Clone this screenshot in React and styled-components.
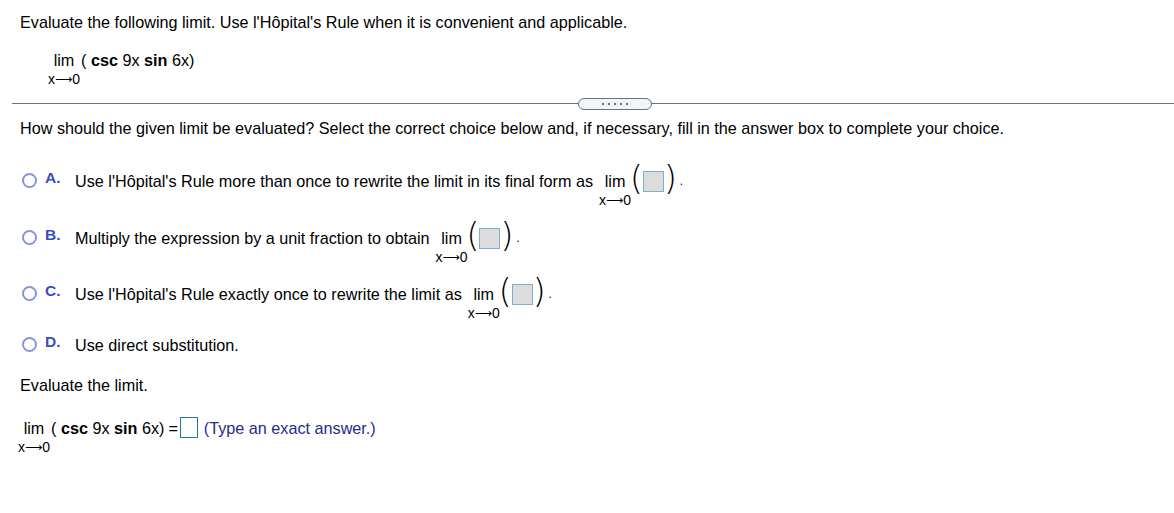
import React from 'react';
import styled, { createGlobalStyle } from 'styled-components';

const Global = createGlobalStyle`
  body {
    margin: 0;
    background: #fff;
    font-family: "Liberation Sans", Arial, sans-serif;
    color: #000;
  }
`;

const options = [
  { key: 'A', text: "Use l'Hôpital's Rule more than once to rewrite the limit in its final form as", lim: true, h: 57 },
  { key: 'B', text: 'Multiply the expression by a unit fraction to obtain', lim: true, h: 56 },
  { key: 'C', text: "Use l'Hôpital's Rule exactly once to rewrite the limit as", lim: true, h: 51 },
  { key: 'D', text: 'Use direct substitution.', lim: false, h: 30 },
];

function LimOp() {
  return (
    <S.LimOp>
      <S.LimWord>lim</S.LimWord>
      <S.LimSub>
        x<S.Arrow>⟶</S.Arrow>0
      </S.LimSub>
    </S.LimOp>
  );
}

function Expr() {
  return (
    <S.Expr>
      (&nbsp;<b>csc</b> 9x <b>sin</b> 6x)
    </S.Expr>
  );
}

export default function App() {
  return (
    <S.Page>
      <Global />
      <S.Intro>
        <S.Text>Evaluate the following limit. Use l'Hôpital's Rule when it is convenient and applicable.</S.Text>
        <S.LimRow>
          <LimOp />
          <Expr />
        </S.LimRow>
      </S.Intro>

      <S.Divider>
        <S.Pill>
          {[0, 1, 2, 3, 4].map(i => (
            <S.Dot key={i} />
          ))}
        </S.Pill>
      </S.Divider>

      <S.Body>
        <S.Text>
          How should the given limit be evaluated? Select the correct choice below and, if necessary, fill in the
          answer box to complete your choice.
        </S.Text>

        <S.Choices>
          {options.map(o => (
            <S.Choice key={o.key} $h={o.h}>
              <S.Radio />
              <S.Letter>{o.key}.</S.Letter>
              <S.ChoiceText>{o.text}</S.ChoiceText>
              {o.lim && (
                <>
                  <LimOp />
                  <S.Paren>(</S.Paren>
                  <S.GrayBox />
                  <S.Paren>)</S.Paren>
                  <S.Period>.</S.Period>
                </>
              )}
            </S.Choice>
          ))}
        </S.Choices>

        <S.Text>Evaluate the limit.</S.Text>

        <S.AnswerRow>
          <LimOp />
          <Expr />
          <S.Eq>=</S.Eq>
          <S.AnswerBox />
          <S.Hint>(Type an exact answer.)</S.Hint>
        </S.AnswerRow>
      </S.Body>
    </S.Page>
  );
}

const S = {
  Page: styled.div`
    width: 1174px;
    padding-top: 13px;
    font-size: 16.2px;
  `,
  Intro: styled.div`
    padding-left: 20px;
  `,
  Text: styled.p`
    margin: 0;
    line-height: 18px;
  `,
  LimRow: styled.div`
    display: flex;
    align-items: flex-start;
    margin-top: 20px;
    margin-left: 28px;
  `,
  LimOp: styled.div`
    display: inline-flex;
    flex-direction: column;
    align-items: center;
    margin-right: 1px;
  `,
  LimWord: styled.span`
    line-height: 18px;
  `,
  LimSub: styled.span`
    display: flex;
    align-items: center;
    font-size: 14px;
    line-height: 14px;
    margin-top: 3px;
    white-space: nowrap;
  `,
  Arrow: styled.span`
    font-family: "DejaVu Sans", sans-serif;
    font-size: 12px;
  `,
  Expr: styled.span`
    line-height: 18px;
    white-space: nowrap;
    b {
      font-weight: bold;
    }
  `,
  Divider: styled.div`
    position: relative;
    margin: 12px 0 0 12px;
    height: 12px;
    display: flex;
    align-items: center;
    justify-content: center;
    &::before {
      content: '';
      position: absolute;
      left: 0;
      right: 0;
      top: 5px;
      border-top: 1px solid #6b7280;
    }
  `,
  Pill: styled.div`
    position: relative;
    width: 72px;
    height: 10px;
    margin-left: 44px;
    border: 1px solid #6b7280;
    border-radius: 6px;
    background: #f3f4f6;
    display: flex;
    align-items: center;
    justify-content: center;
    gap: 4px;
  `,
  Dot: styled.span`
    width: 2px;
    height: 2px;
    background: #6b7280;
  `,
  Body: styled.div`
    padding-left: 20px;
    margin-top: 9px;
  `,
  Choices: styled.div`
    display: flex;
    flex-direction: column;
    margin: 35px 0 10px 2px;
  `,
  Choice: styled.div`
    display: flex;
    align-items: flex-start;
    height: ${p => p.$h}px;
  `,
  Radio: styled.span`
    width: 11px;
    height: 11px;
    border: 2px solid #8595dc;
    border-radius: 50%;
    margin-top: 1px;
    flex-shrink: 0;
  `,
  Letter: styled.span`
    width: 30px;
    margin-left: 8px;
    font-size: 15.5px;
    font-weight: bold;
    color: #3a4cc0;
    line-height: 14px;
    margin-top: -1px;
  `,
  ChoiceText: styled.span`
    line-height: 18px;
    margin-right: 6px;
    white-space: nowrap;
  `,
  Paren: styled.span`
    font-family: "DejaVu Sans", sans-serif;
    font-size: 33px;
    font-weight: 200;
    line-height: 24px;
    margin: -5px -2px 0 -2px;
  `,
  GrayBox: styled.span`
    width: 19px;
    height: 19px;
    margin: -1px 2px 0;
    background: #dcdcdc;
    border: 1px solid #7fb2c6;
  `,
  Period: styled.span`
    line-height: 18px;
    margin-left: 5px;
    font-size: 12px;
  `,
  AnswerRow: styled.div`
    display: flex;
    align-items: flex-start;
    margin-top: 25px;
    margin-left: -2px;
  `,
  Eq: styled.span`
    line-height: 18px;
    margin-left: 4px;
  `,
  AnswerBox: styled.span`
    width: 16px;
    height: 19px;
    margin: -2px 6px 0 2px;
    border: 1.5px solid #1b7a96;
  `,
  Hint: styled.span`
    line-height: 18px;
    color: #262b8c;
  `,
};
